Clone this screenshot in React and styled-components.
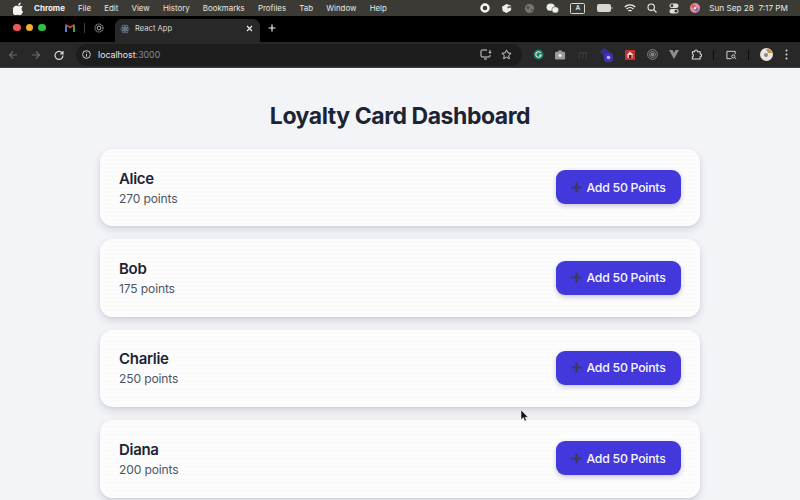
import React from "react";
import styled, { createGlobalStyle } from "styled-components";

const customers = [
  { name: "Alice", points: 270 },
  { name: "Bob", points: 175 },
  { name: "Charlie", points: 250 },
  { name: "Diana", points: 200 },
];

const menus = ["File", "Edit", "View", "History", "Bookmarks", "Profiles", "Tab", "Window", "Help"];

const App = () => {
  return (
    <Screen>
      <GlobalStyle />
      <MenuBar>
        <MenuLeft>
          <svg width="11" height="13" viewBox="0 0 24 28" fill="#f2f2f2">
            <path d="M17 1c.2 2-.6 3.500-1.600 4.700-1 1.200-2.600 2.100-4.200 2-.2-1.800.7-3.500 1.600-4.600C13.900 1.900 15.600 1.100 17 1zM22 21c-.7 1.600-1 2.200-1.900 3.600-1.200 1.900-2.900 4.200-5 4.200-1.900 0-2.400-1.200-4.900-1.200s-3.100 1.200-5 1.200c-2.100 0-3.700-2.100-4.900-4C-2.900 19.500-.6 11.800 3.500 9.300c1.800-1.100 3.600-1.300 5-1.300 1.700 0 2.700 1 4.100 1s2.200-1 4.300-1c1.600 0 3.300.8 4.500 2.300-3.900 2.100-3.300 7.700.6 10.700z" />
          </svg>
          <AppName>Chrome</AppName>
          <MenuItems>
            {menus.map((label) => (
              <span key={label}>{label}</span>
            ))}
          </MenuItems>
        </MenuLeft>
        <MenuRight>
          <svg width="10" height="10" viewBox="0 0 10 10">
            <circle cx="5" cy="5" r="3.500" fill="none" stroke="#f5f5f5" strokeWidth="2.500" />
          </svg>
          <svg width="11" height="11" viewBox="0 0 12 12">
            <path d="M1 4l5-3 5 2v5l-5 3-4-2z" fill="#eee" />
            <path d="M7 4l4-1v2l-4 1z" fill="#555" />
          </svg>
          <svg width="11" height="11" viewBox="0 0 12 12">
            <circle cx="6" cy="6" r="5" fill="#77776f" />
            <path d="M3 3l3 1-1 3-2-1zM8 6l2 1-2 3z" fill="#4a4a42" />
          </svg>
          <svg width="13" height="11" viewBox="0 0 14 12" fill="#eee">
            <ellipse cx="5" cy="4.500" rx="4.500" ry="4" />
            <ellipse cx="10" cy="7.500" rx="3.800" ry="3.400" stroke="#3b3a34" strokeWidth=".6" />
          </svg>
          <InputBadge>A</InputBadge>
          <svg width="16" height="8" viewBox="0 0 16 8">
            <rect x="0" y="0" width="14" height="8" rx="2" fill="#d8d8d4" />
            <rect x="14.500" y="3" width="1.200" height="2" fill="#99998f" />
          </svg>
          <svg width="12" height="9" viewBox="0 0 12 9" fill="none" stroke="#f2f2f2" strokeWidth="1.300">
            <path d="M.8 3a7.500 7.500 0 0 1 10.400 0M2.600 5a5 5 0 0 1 6.800 0M4.400 7a2.500 2.500 0 0 1 3.200 0" />
          </svg>
          <svg width="10" height="10" viewBox="0 0 10 10" fill="none" stroke="#eee" strokeWidth="1.100">
            <circle cx="4.200" cy="4.200" r="3.200" />
            <path d="M6.600 6.600L9.500 9.500" />
          </svg>
          <svg width="10" height="11" viewBox="0 0 10 11">
            <rect x="0.500" y="0.500" width="9" height="4.500" rx="2.200" fill="#ddd" />
            <circle cx="3" cy="2.700" r="1.400" fill="#333" />
            <rect x="0.500" y="6" width="9" height="4.500" rx="2.200" fill="#ddd" />
            <circle cx="7" cy="8.200" r="1.400" fill="#333" />
          </svg>
          <svg width="10" height="10" viewBox="0 0 10 10">
            <circle cx="5" cy="5" r="5" fill="#e58aa8" />
            <circle cx="3.500" cy="3.500" r="2" fill="#d9602f" />
            <circle cx="6.500" cy="6.500" r="2" fill="#6d71c9" />
            <circle cx="5" cy="5" r="1.200" fill="#f3e9ea" />
          </svg>
          <Clock>Sun Sep 28&nbsp;&nbsp;7:17 PM</Clock>
        </MenuRight>
      </MenuBar>

      <TabStrip>
        <TrafficLights>
          <Light $color="#ee5a52" />
          <Light $color="#f5b02e" />
          <Light $color="#2fc046" />
        </TrafficLights>
        <PinnedTabs>
          <svg width="10" height="8" viewBox="0 0 10 8">
            <path d="M0 8V1l2 1v6z" fill="#4a7fe0" />
            <path d="M8 8V2l2-1v7z" fill="#3aa757" />
            <path d="M0 1l5 3.500L10 1 9 0 5 2.500 1 0z" fill="#e0453a" />
          </svg>
          <TabDivider />
          <svg width="10" height="10" viewBox="0 0 10 10" fill="none" stroke="#8b8b8b" strokeWidth="1.200">
            <circle cx="5" cy="5" r="4" strokeDasharray="1.500 .6" />
            <circle cx="5" cy="5" r="1.800" />
          </svg>
        </PinnedTabs>
        <ActiveTab>
          <svg width="10" height="10" viewBox="0 0 20 20" fill="none" stroke="#6d8ba6" strokeWidth="1.300">
            <circle cx="10" cy="10" r="1.800" fill="#6d8ba6" />
            <ellipse cx="10" cy="10" rx="9" ry="3.600" />
            <ellipse cx="10" cy="10" rx="9" ry="3.600" transform="rotate(60 10 10)" />
            <ellipse cx="10" cy="10" rx="9" ry="3.600" transform="rotate(120 10 10)" />
          </svg>
          <TabTitle>React App</TabTitle>
          <svg width="7" height="7" viewBox="0 0 7 7" stroke="#e8e8e8" strokeWidth="1.200">
            <path d="M1 1l5 5M6 1L1 6" />
          </svg>
        </ActiveTab>
        <NewTab>
          <svg width="8" height="8" viewBox="0 0 8 8" stroke="#f0f0f0" strokeWidth="1.200">
            <path d="M4 .5v7M.5 4h7" />
          </svg>
        </NewTab>
      </TabStrip>

      <Toolbar>
        <NavButtons>
          <svg width="10" height="10" viewBox="0 0 10 10" fill="none" stroke="#6b6b6b" strokeWidth="1.100">
            <path d="M9 5H1.500M5 1.500L1.500 5 5 8.500" />
          </svg>
          <svg width="10" height="10" viewBox="0 0 10 10" fill="none" stroke="#6b6b6b" strokeWidth="1.100">
            <path d="M1 5h7.500M5 1.500L8.500 5 5 8.500" />
          </svg>
          <svg width="10" height="10" viewBox="0 0 10 10" fill="none" stroke="#d8d8d8" strokeWidth="1.200">
            <path d="M8.500 3.500A4 4 0 1 0 9 5.500M9 1v3H6" />
          </svg>
        </NavButtons>
        <UrlPill>
          <UrlText>
            <svg width="9" height="9" viewBox="0 0 10 10" fill="none" stroke="#e0e0e0" strokeWidth="1">
              <circle cx="5" cy="5" r="4.300" />
              <path d="M5 4.500v3M5 2.500v1" />
            </svg>
            <span>
              localhost<UrlPort>:3000</UrlPort>
            </span>
          </UrlText>
          <UrlActions>
            <svg width="12" height="11" viewBox="0 0 12 11" fill="none" stroke="#d8d8d8" strokeWidth="1">
              <path d="M7 1H2a1 1 0 0 0-1 1v5a1 1 0 0 0 1 1h7a1 1 0 0 0 1-1V6M4 10h3M10 1v3M8.800 3L10 4.300 11.200 3" />
            </svg>
            <svg width="11" height="11" viewBox="0 0 12 12" fill="none" stroke="#d8d8d8" strokeWidth="1">
              <path d="M6 1l1.500 3.300 3.500.4-2.600 2.400.7 3.500L6 8.900l-3.100 1.700.7-3.500L1 4.700l3.500-.4z" />
            </svg>
          </UrlActions>
        </UrlPill>
        <Extensions>
          <svg width="11" height="11" viewBox="0 0 12 12">
            <circle cx="6" cy="6" r="5.500" fill="#1f7a63" />
            <path d="M8.500 4.200A3 3 0 1 0 9 6.500H6.500" fill="none" stroke="#dfeee9" strokeWidth="1.200" />
          </svg>
          <svg width="11" height="10" viewBox="0 0 12 10">
            <rect y="1.500" width="11" height="8.500" rx="1.500" fill="#9a9a9a" />
            <rect x="3.500" width="4" height="2" fill="#9a9a9a" />
            <circle cx="5.500" cy="5.500" r="1.800" fill="#e8e8e8" />
          </svg>
          <FadedMark>m</FadedMark>
          <svg width="15" height="14" viewBox="0 0 15 14">
            <path d="M1 4l4-4 5 3 1 3-5 3z" fill="#3a2c8f" />
            <rect x="5" y="5" width="9" height="9" rx="3" fill="#3b35b5" />
            <circle cx="9.500" cy="9.500" r="1.800" fill="#c9a8e8" />
          </svg>
          <svg width="10" height="10" viewBox="0 0 10 10">
            <rect width="10" height="10" rx="1" fill="#c9302c" />
            <path d="M5 1.500L1.500 5h1v3h5V5h1z" fill="#f5d5d0" />
            <rect x="4" y="5" width="2.500" height="3" fill="#3b2020" />
          </svg>
          <svg width="11" height="11" viewBox="0 0 12 12" fill="none" stroke="#8f8f8f">
            <circle cx="6" cy="6" r="5.300" />
            <circle cx="6" cy="6" r="3.200" />
            <circle cx="6" cy="6" r="1.500" fill="#8f8f8f" />
          </svg>
          <svg width="10" height="9" viewBox="0 0 10 9">
            <path d="M0 0h3.500L5 3l1.500-3H10L5 9z" fill="#8e8e8e" />
          </svg>
          <svg width="11" height="11" viewBox="0 0 12 12" fill="none" stroke="#e2e2e2" strokeWidth="1.100">
            <path d="M1.500 3H4c0-2.500 3-2.500 3 0h3v2.500c2 0 2 3 0 3V11H1.500V8.500c1.500 0 1.500-3 0-3z" />
          </svg>
          <ToolbarDivider />
          <svg width="11" height="10" viewBox="0 0 12 10" fill="none" stroke="#e2e2e2">
            <path d="M6 9H1V1h9v3" />
            <circle cx="8" cy="6.500" r="1.700" />
            <path d="M9.300 7.800l1.700 1.700" />
          </svg>
          <ToolbarDivider />
          <svg width="13" height="13" viewBox="0 0 13 13">
            <circle cx="6.500" cy="6.500" r="6.500" fill="#e9e6de" />
            <path d="M6 1a5.500 5.500 0 0 1 6 4L8 5z" fill="#c98f3a" />
            <circle cx="6" cy="7" r="2" fill="#8a8a80" />
          </svg>
          <svg width="3" height="11" viewBox="0 0 3 11" fill="#dcdcdc">
            <circle cx="1.500" cy="1.500" r="1" />
            <circle cx="1.500" cy="5.500" r="1" />
            <circle cx="1.500" cy="9.500" r="1" />
          </svg>
        </Extensions>
      </Toolbar>

      <Page>
        <Title>Loyalty Card Dashboard</Title>
        <CardList>
          {customers.map((c) => (
            <Card key={c.name}>
              <CardInfo>
                <CardName>{c.name}</CardName>
                <CardPoints>{c.points} points</CardPoints>
              </CardInfo>
              <AddButton>
                <svg width="11" height="11" viewBox="0 0 11 11" stroke="#3a3a58" strokeWidth="2.200">
                  <path d="M5.500 .5v10M.5 5.500h10" />
                </svg>
                Add 50 Points
              </AddButton>
            </Card>
          ))}
        </CardList>
        <Cursor width="9" height="13" viewBox="0 0 9 13">
          <path d="M1 1v9.500l2.300-2 1.500 3.500 1.600-.7L5 8.300h3z" fill="#111" stroke="#eee" strokeWidth=".5" />
        </Cursor>
      </Page>
    </Screen>
  );
};

export default App;

const GlobalStyle = createGlobalStyle`
  html, body {
    margin: 0;
    padding: 0;
    height: 100%;
    overflow: hidden;
  }
`;

const Screen = styled.div`
  width: 800px;
  height: 500px;
  overflow: hidden;
  display: flex;
  flex-direction: column;
  font-family: Inter, "Liberation Sans", sans-serif;
  background: #f3f4f8;
`;

const MenuBar = styled.div`
  height: 16px;
  flex: none;
  display: flex;
  justify-content: space-between;
  align-items: center;
  padding: 0 12px 0 13px;
  background: #3b3a34;
  color: #e8e8e4;
  font-size: 7.900px;
`;

const MenuLeft = styled.div`
  display: flex;
  align-items: center;
`;

const AppName = styled.span`
  font-weight: 700;
  color: #f4f4f4;
  margin: 0 13px 0 10px;
  font-size: 8px;
`;

const MenuItems = styled.div`
  display: flex;
  gap: 13.200px;
`;

const MenuRight = styled.div`
  display: flex;
  align-items: center;
  gap: 11.300px;
`;

const InputBadge = styled.span`
  width: 13px;
  height: 9px;
  border: 1px solid #d8d8d4;
  border-radius: 1.500px;
  font-size: 6.500px;
  font-weight: 600;
  display: flex;
  align-items: center;
  justify-content: center;
`;

const Clock = styled.span`
  margin-left: -2px;
  white-space: nowrap;
  font-size: 8.200px;
`;

const TabStrip = styled.div`
  height: 26px;
  flex: none;
  display: flex;
  align-items: flex-end;
  background: #000;
  padding-left: 13px;
`;

const TrafficLights = styled.div`
  height: 100%;
  display: flex;
  align-items: center;
  gap: 5px;
  width: 52px;
  padding-bottom: 3px;
  box-sizing: border-box;
`;

const Light = styled.span`
  width: 7.500px;
  height: 7.500px;
  border-radius: 50%;
  background: ${(p) => p.$color};
`;

const PinnedTabs = styled.div`
  height: 100%;
  display: flex;
  align-items: center;
  gap: 9px;
  width: 50px;
  padding-bottom: 3px;
  box-sizing: border-box;
`;

const TabDivider = styled.span`
  width: 1px;
  height: 10px;
  background: #444;
`;

const ActiveTab = styled.div`
  width: 145px;
  height: 23px;
  box-sizing: border-box;
  background: #282828;
  border-radius: 7px 7px 0 0;
  display: flex;
  align-items: center;
  padding: 0 7px 4px 5px;
  gap: 5px;
`;

const TabTitle = styled.span`
  flex: 1;
  color: #d8d8d8;
  font-size: 7.600px;
`;

const NewTab = styled.div`
  height: 100%;
  display: flex;
  align-items: center;
  padding: 0 0 3px 8px;
  box-sizing: border-box;
`;

const Toolbar = styled.div`
  height: 26px;
  flex: none;
  display: flex;
  align-items: center;
  background: #282828;
  padding-left: 8px;
  box-sizing: border-box;
  border-bottom: 1px solid #3a3a3a;
`;

const NavButtons = styled.div`
  display: flex;
  align-items: center;
  gap: 13px;
  width: 68px;
`;

const UrlPill = styled.div`
  width: 446px;
  height: 22px;
  flex: none;
  box-sizing: border-box;
  padding: 0 10px 0 6px;
  border-radius: 11px;
  background: #1d1d1d;
  display: flex;
  align-items: center;
  justify-content: space-between;
`;

const UrlText = styled.div`
  display: flex;
  align-items: center;
  gap: 7px;
  color: #e6e6e6;
  font-size: 8.800px;
`;

const UrlPort = styled.span`
  color: #8a8a8a;
`;

const UrlActions = styled.div`
  display: flex;
  align-items: center;
  gap: 9px;
`;

const Extensions = styled.div`
  flex: 1;
  display: flex;
  align-items: center;
  justify-content: space-between;
  padding: 0 12px 0 11px;
`;

const FadedMark = styled.span`
  color: #3f3f3f;
  font-size: 11px;
  font-style: italic;
`;

const ToolbarDivider = styled.span`
  width: 1px;
  height: 10px;
  background: #0c0c0c;
`;

const Page = styled.main`
  flex: 1;
  min-height: 0;
  position: relative;
  overflow: hidden;
  display: flex;
  flex-direction: column;
  align-items: center;
  padding-top: 33px;
  background: #f3f4f8;
`;

const Title = styled.h1`
  margin: 0 0 18px;
  font-size: 23px;
  letter-spacing: -0.45px;
  line-height: 30px;
  font-weight: 700;
  color: #1c2433;
`;

const CardList = styled.div`
  width: 600px;
  display: flex;
  flex-direction: column;
  gap: 13px;
`;

const Card = styled.div`
  height: 77.400px;
  flex: none;
  box-sizing: border-box;
  padding: 0 19px;
  display: flex;
  align-items: center;
  justify-content: space-between;
  border-radius: 13px;
  background: repeating-linear-gradient(#fdfdfe 0 2px, #fbfbfc 2px 4px);
  box-shadow: 0 4px 9px rgba(30, 35, 60, 0.13), 0 1px 3px rgba(30, 35, 60, 0.08);
`;

const CardInfo = styled.div`
  padding-top: 2px;
`;

const CardName = styled.div`
  font-size: 15px;
  letter-spacing: -0.3px;
  line-height: 20px;
  font-weight: 600;
  color: #1c2433;
`;

const CardPoints = styled.div`
  font-size: 12.100px;
  letter-spacing: -0.15px;
  line-height: 20px;
  color: #4d5563;
`;

const AddButton = styled.button`
  width: 125px;
  height: 34px;
  margin-bottom: 1px;
  border: none;
  border-radius: 9px;
  display: flex;
  align-items: center;
  justify-content: center;
  gap: 4px;
  background: #4338dc;
  color: #f5f5fd;
  font-family: inherit;
  font-size: 12.300px;
  letter-spacing: -0.25px;
  font-weight: 500;
  box-shadow: 0 2px 5px rgba(40, 40, 90, 0.25);
  cursor: pointer;
`;

const Cursor = styled.svg`
  position: absolute;
  left: 520px;
  top: 341px;
`;
